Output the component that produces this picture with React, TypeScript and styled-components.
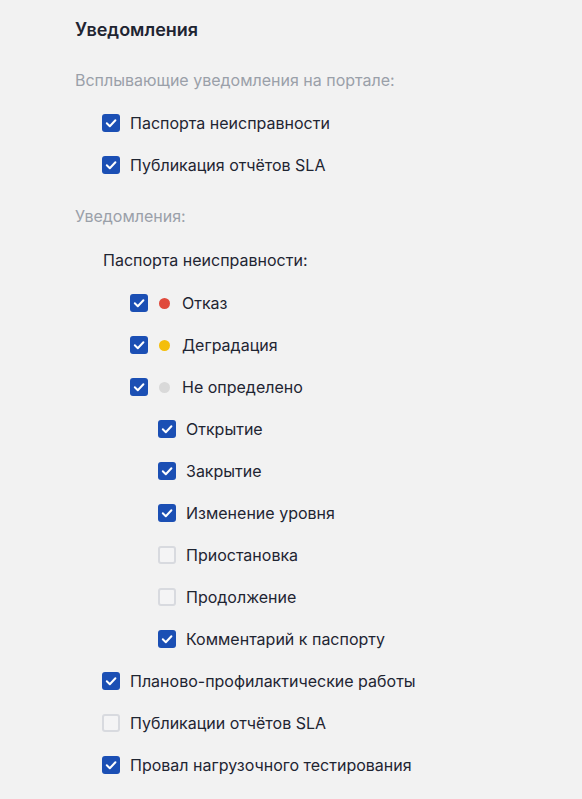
import React from "react";
import styled, { createGlobalStyle } from "styled-components";

const Global = createGlobalStyle`
  html, body { margin: 0; padding: 0; background: #f2f2f2; }
  body { font-family: Inter, "Noto Sans", sans-serif; color: #1f2532; }
`;

const Page = styled.div`
  padding: 18px 0 0 75px;
  display: flex;
  flex-direction: column;
`;

const Title = styled.h2`
  margin: 0;
  font-size: 18px;
  font-weight: 600;
  line-height: 24px;
  color: #1f2532;
`;

const Label = styled.div<{ $mt: number }>`
  margin-top: ${(p) => p.$mt}px;
  font-size: 16px;
  line-height: 24px;
  color: #9aa0a9;
`;

const SubLabel = styled.div`
  margin-top: 20px;
  margin-left: 28px;
  font-size: 16px;
  line-height: 24px;
  color: #1f2532;
`;

const List = styled.div<{ $mt: number }>`
  margin-top: ${(p) => p.$mt}px;
  display: flex;
  flex-direction: column;
`;

const Row = styled.label<{ $level: number }>`
  display: flex;
  align-items: center;
  height: 42px;
  padding-left: ${(p) => 27 + p.$level * 28}px;
  font-size: 16px;
  color: #1f2532;
  gap: 10px;
`;

const Box = styled.span<{ $checked: boolean }>`
  width: 18px;
  height: 18px;
  box-sizing: border-box;
  border-radius: 3px;
  flex-shrink: 0;
  display: flex;
  align-items: center;
  justify-content: center;
  background: ${(p) => (p.$checked ? "#1b4fb4" : "#f4f4f5")};
  border: ${(p) => (p.$checked ? "none" : "2px solid #d8dadf")};
`;

const Dot = styled.span<{ $color: string }>`
  width: 11px;
  height: 11px;
  border-radius: 50%;
  background: ${(p) => p.$color};
  margin: 0 2px 0 1px;
  flex-shrink: 0;
`;

const Text = styled.span`
  line-height: 20px;
`;

type Item = { text: string; checked: boolean; level: number; dot?: string };

const CheckRow = ({ text, checked, level, dot }: Item) => (
  <Row $level={level}>
    <Box $checked={checked}>
      {checked && (
        <svg width="18" height="18" viewBox="0 0 18 18">
          <path d="M4.8 9.3 L7.8 12.2 L13.4 6.2" fill="none" stroke="#fff" strokeWidth="2" strokeLinecap="round" strokeLinejoin="round" />
        </svg>
      )}
    </Box>
    {dot && <Dot $color={dot} />}
    <Text>{text}</Text>
  </Row>
);

const popup: Item[] = [
  { text: "Паспорта неисправности", checked: true, level: 0 },
  { text: "Публикация отчётов SLA", checked: true, level: 0 },
];

const notif: Item[] = [
  { text: "Отказ", checked: true, level: 1, dot: "#e04a3c" },
  { text: "Деградация", checked: true, level: 1, dot: "#f4be0a" },
  { text: "Не определено", checked: true, level: 1, dot: "#d9d9d9" },
  { text: "Открытие", checked: true, level: 2 },
  { text: "Закрытие", checked: true, level: 2 },
  { text: "Изменение уровня", checked: true, level: 2 },
  { text: "Приостановка", checked: false, level: 2 },
  { text: "Продолжение", checked: false, level: 2 },
  { text: "Комментарий к паспорту", checked: true, level: 2 },
  { text: "Планово-профилактические работы", checked: true, level: 0 },
  { text: "Публикации отчётов SLA", checked: false, level: 0 },
  { text: "Провал нагрузочного тестирования", checked: true, level: 0 },
];

export default function App() {
  return (
    <>
      <Global />
      <Page>
        <Title>Уведомления</Title>
        <Label $mt={26}>Всплывающие уведомления на портале:</Label>
        <List $mt={10}>
          {popup.map((i) => (
            <CheckRow key={i.text} {...i} />
          ))}
        </List>
        <Label $mt={18}>Уведомления:</Label>
        <SubLabel>Паспорта неисправности:</SubLabel>
        <List $mt={10}>
          {notif.map((i) => (
            <CheckRow key={i.text} {...i} />
          ))}
        </List>
      </Page>
    </>
  );
}
